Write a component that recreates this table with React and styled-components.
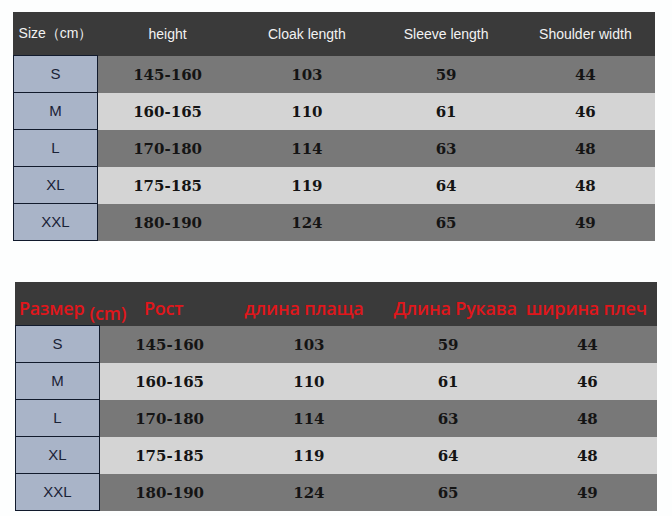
import React from "react";
import styled, { createGlobalStyle } from "styled-components";

const rows = [
  ["S", "145-160", "103", "59", "44"],
  ["M", "160-165", "110", "61", "46"],
  ["L", "170-180", "114", "63", "48"],
  ["XL", "175-185", "119", "64", "48"],
  ["XXL", "180-190", "124", "65", "49"],
];

const enHeads = ["Size\uFF08cm\uFF09", "height", "Cloak length", "Sleeve length", "Shoulder width"];

class App extends React.Component {
  render() {
    return (
      <Page>
        <GlobalStyle />
        <Table $shift={0}>
          <HeadRow>
            {enHeads.map((h) => (
              <EnHead key={h}>{h}</EnHead>
            ))}
          </HeadRow>
          {rows.map((r, i) => (
            <Row key={r[0]} $dark={i % 2 === 0}>
              <SizeCell>{r[0]}</SizeCell>
              {r.slice(1).map((v, j) => (
                <Value key={j}>{v}</Value>
              ))}
            </Row>
          ))}
        </Table>

        <Table $shift={2}>
          <HeadRow>
            <RuHead $start>
              Размер <Small>(cm)</Small>
            </RuHead>
            <RuHead $nudge={-12}>Рост</RuHead>
            <RuHead $nudge={-10}>длина плаща</RuHead>
            <RuHead $nudge={14}>Длина Рукава</RuHead>
            <RuHead $nudge={-2}>ширина плеч</RuHead>
          </HeadRow>
          {rows.map((r, i) => (
            <Row key={r[0]} $dark={i % 2 === 0}>
              <SizeCell>{r[0]}</SizeCell>
              {r.slice(1).map((v, j) => (
                <Value key={j}>{v}</Value>
              ))}
            </Row>
          ))}
        </Table>
      </Page>
    );
  }
}

export default App;

const GlobalStyle = createGlobalStyle`
  body {
    margin: 0;
    background: #fff;
  }
`;

const Page = styled.div`
  width: 672px;
  height: 516px;
  padding: 12px 0 0 13px;
  box-sizing: border-box;
  display: flex;
  flex-direction: column;
  gap: 41px;
  background: #fdfefe;
`;

const Table = styled.div`
  width: 642px;
  margin-left: ${(p) => p.$shift}px;
  display: flex;
  flex-direction: column;
`;

const HeadRow = styled.div`
  display: grid;
  grid-template-columns: 85px repeat(4, 1fr);
  height: 44px;
  background: #3a3a3a;
`;

const EnHead = styled.div`
  display: flex;
  align-items: center;
  justify-content: center;
  padding-bottom: 1px;
  font-family: "Liberation Sans", Arial, sans-serif;
  font-size: 14px;
  color: #f2f2f2;
  white-space: nowrap;
`;

const RuHead = styled.div`
  display: flex;
  align-items: flex-end;
  justify-content: ${(p) => (p.$start ? "flex-start" : "center")};
  padding-left: ${(p) => (p.$start ? "4px" : p.$nudge > 0 ? `${p.$nudge}px` : "0")};
  padding-right: ${(p) => (p.$nudge < 0 ? `${-p.$nudge}px` : "0")};
  padding-bottom: 6px;
  font-family: "Open Sans", "Noto Sans", sans-serif;
  font-weight: 600;
  font-size: 18px;
  letter-spacing: -0.2px;
  color: #e0161b;
  white-space: nowrap;
  overflow: visible;
`;

const Small = styled.span`
  position: relative;
  top: 5px;
  margin-left: 5px;
`;

const Row = styled.div`
  display: grid;
  grid-template-columns: 85px repeat(4, 1fr);
  height: 37px;
  background: ${(p) => (p.$dark ? "#787878" : "#d4d4d4")};
`;

const SizeCell = styled.div`
  display: flex;
  align-items: center;
  justify-content: center;
  background: #a9b4c8;
  border: 1.5px solid #111a2c;
  margin-top: -1.5px;
  font-family: "Liberation Sans", Arial, sans-serif;
  font-size: 15px;
  color: #1a2236;

  ${Row}:first-of-type > & {
    margin-top: 0;
  }
`;

const Value = styled.div`
  display: flex;
  align-items: center;
  justify-content: center;
  font-family: "DejaVu Serif", "Liberation Serif", serif;
  font-weight: 700;
  font-size: 15px;
  color: #141414;
`;
